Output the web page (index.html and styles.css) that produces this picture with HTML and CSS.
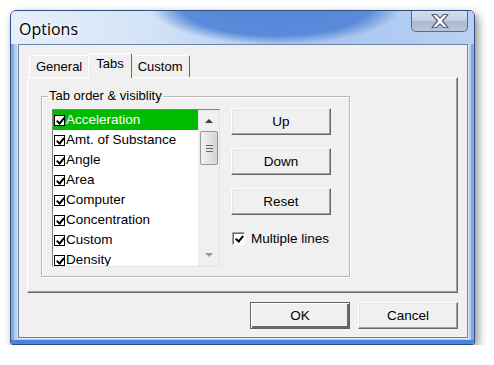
FILE: index.html
```html
<!DOCTYPE html>
<html lang="en">
<head>
    <meta charset="UTF-8">
    <title>Options</title>
    <link rel="stylesheet" href="styles.css">
</head>
<body>
    <div class="window">
        <div class="titlebar">
            <span class="title">Options</span>
            <button class="close-btn" aria-label="Close">
                <svg width="22" height="16" viewBox="0 0 22 16">
                    <path d="M3 1.5h4.5l3.5 3.6 3.5-3.6h4.5l-5.6 6.5 5.6 6.5h-4.5l-3.5-3.6-3.5 3.6h-4.5l5.6-6.5z" fill="#fff" stroke="#5b6478" stroke-width="1.2" stroke-linejoin="round"/>
                </svg>
            </button>
        </div>

        <div class="frame">
            <div class="client">
                <div class="tabs">
                    <div class="tab">General</div>
                    <div class="tab active">Tabs</div>
                    <div class="tab">Custom</div>
                </div>

                <div class="tab-panel">
                    <fieldset class="group">
                        <legend>Tab order &amp; visiblity</legend>
                        <div class="group-body">
                            <div class="listbox">
                                <ul class="items">
                                    <li class="selected"><span class="chk"></span>Acceleration</li>
                                    <li><span class="chk"></span>Amt. of Substance</li>
                                    <li><span class="chk"></span>Angle</li>
                                    <li><span class="chk"></span>Area</li>
                                    <li><span class="chk"></span>Computer</li>
                                    <li><span class="chk"></span>Concentration</li>
                                    <li><span class="chk"></span>Custom</li>
                                    <li><span class="chk"></span>Density</li>
                                </ul>
                                <div class="scrollbar">
                                    <span class="arrow up"></span>
                                    <div class="thumb"><span></span><span></span><span></span></div>
                                    <span class="arrow down"></span>
                                </div>
                            </div>

                            <div class="side">
                                <button class="btn">Up</button>
                                <button class="btn">Down</button>
                                <button class="btn">Reset</button>
                                <label class="check-row"><span class="box"></span>Multiple lines</label>
                            </div>
                        </div>
                    </fieldset>
                </div>

                <div class="footer">
                    <button class="btn default">OK</button>
                    <button class="btn">Cancel</button>
                </div>
            </div>
        </div>
    </div>
</body>
</html>
```

FILE: styles.css
```css
:root {
    --face: #f0f0f0;
    --shadow: #a0a0a0;
    --dark: #696969;
    --text: #000;
}

* {
    box-sizing: border-box;
}

body {
    margin: 0;
    padding: 10px 0 0 10px;
    background: #fff;
    font-family: 'Liberation Sans', Arial, sans-serif;
    font-size: 13px;
    color: var(--text);
}

.window {
    width: 465px;
    height: 335px;
    border: 1px solid #2f4f7e;
    border-radius: 6px 6px 3px 3px;
    background-color: #b4cdf0;
    box-shadow: 3px 4px 10px rgba(0,0,0,0.45);
    display: flex;
    flex-direction: column;
    overflow: hidden;
}

/* caption with a darker swoosh across the middle */
.titlebar {
    height: 33px;
    flex-shrink: 0;
    position: relative;
    display: flex;
    align-items: flex-start;
    background-color: #bcd3f3;
    background-image:
        radial-gradient(ellipse 125px 38px at 265px -4px, #5586d9 0%, #5a8ad9 75%, rgba(90,138,217,0) 100%),
        linear-gradient(to right, #e6effb 0%, #d3e3f7 30%, #a9c5ef 65%, #b8d1f3 100%);
}

.title {
    position: relative;
    font-family: 'Open Sans', 'DejaVu Sans', sans-serif;
    font-size: 16px;
    margin: 7px 0 0 8px;
    color: #000;
    text-shadow: 0 0 8px #fff, 0 0 4px #fff;
}

.close-btn {
    position: absolute;
    top: -1px;
    right: 6px;
    width: 57px;
    height: 22px;
    padding: 0;
    border: 1px solid #5a6b86;
    border-top: none;
    border-radius: 0 0 5px 5px;
    background-color: #b9c7dc;
    background-image: linear-gradient(to bottom, #d7e1ee 0%, #c2cfe2 50%, #a9b9d2 55%, #b7c6dc 100%);
    display: flex;
    align-items: center;
    justify-content: center;
}

/* side and bottom frame, blue toward the bottom edge */
.frame {
    flex: 1;
    display: flex;
    padding: 0 6px 6px 7px;
    background-color: #b4cdf0;
    box-shadow: inset 0 -4px 0 #4682df, inset 3px 0 0 #7fa9ea, inset -3px 0 0 #7fa9ea;
}

.client {
    flex: 1;
    border: 1px solid #6b84a8;
    box-shadow: 0 0 0 1px #dde8f8;
    background: var(--face);
    display: flex;
    flex-direction: column;
    padding: 8px 9px 0 8px;
}

.tabs {
    display: flex;
    align-items: flex-end;
    height: 24px;
    flex-shrink: 0;
    padding-left: 2px;
    position: relative;
    z-index: 1;
}

.tab {
    height: 22px;
    padding: 0 6px;
    line-height: 22px;
    border: 1px solid #fff;
    border-right-color: var(--dark);
    border-bottom: none;
    border-radius: 2px 2px 0 0;
    background: var(--face);
}

.tab.active {
    height: 25px;
    line-height: 20px;
    padding: 0 7px;
    margin: 0 -1px -1px;
    position: relative;
}

.tab-panel {
    height: 216px;
    flex-shrink: 0;
    border: 1px solid #fff;
    border-right-color: var(--dark);
    border-bottom-color: var(--dark);
    box-shadow: inset -1px -1px 0 var(--shadow);
    padding: 11px 0 0 13px;
}

.group {
    width: 309px;
    height: 188px;
    margin: 0;
    padding: 0 0 0 10px;
    border: 1px solid #b8b8b8;
    box-shadow: inset 1px 1px 0 #fff, 1px 1px 0 #fff;
}

.group legend {
    padding: 0 1px;
    margin-left: -4px;
    line-height: 14px;
}

.group-body {
    display: flex;
    gap: 11px;
    padding-top: 6px;
}

.listbox {
    width: 168px;
    height: 158px;
    border: 1px solid;
    border-color: #828282 #e3e3e3 #e3e3e3 #828282;
    background: #fff;
    display: flex;
    overflow: hidden;
}

.items {
    list-style: none;
    margin: 0;
    padding: 0;
    flex: 1;
}

.items li {
    height: 20px;
    line-height: 20px;
    display: flex;
    align-items: center;
    font-size: 13.5px;
    white-space: nowrap;
}

.items li.selected {
    background: #00bb00;
    color: #fff;
}

.chk {
    width: 11px;
    height: 11px;
    margin: 0 1px 0 1px;
    border: 1px solid #000;
    background: #fff;
    position: relative;
    flex-shrink: 0;
}

.chk::after {
    content: "";
    position: absolute;
    left: 3px;
    top: 0;
    width: 3px;
    height: 6px;
    border: solid #000;
    border-width: 0 2px 2px 0;
    transform: rotate(40deg);
}

.scrollbar {
    width: 21px;
    flex-shrink: 0;
    background: #f0f0f0;
    border-left: 1px solid #e8e8e8;
    display: flex;
    flex-direction: column;
    align-items: center;
}

.arrow {
    width: 0;
    height: 0;
    border-left: 4px solid transparent;
    border-right: 4px solid transparent;
    margin: 9px 0 8px;
}

.arrow.up {
    border-bottom: 4px solid #3c3c3c;
}

.arrow.down {
    margin-top: auto;
    margin-bottom: 9px;
    border-top: 4px solid #9a9a9a;
}

.thumb {
    width: 18px;
    height: 34px;
    border: 1px solid #979797;
    border-radius: 2px;
    background: linear-gradient(to right, #f3f3f3, #e4e4e4 50%, #d2d2d2);
    display: flex;
    flex-direction: column;
    align-items: center;
    justify-content: center;
    gap: 2px;
}

.thumb span {
    width: 7px;
    height: 1px;
    background: #666;
}

.side {
    display: flex;
    flex-direction: column;
    gap: 13px;
    margin-top: -1px;
}

.btn {
    width: 100px;
    height: 27px;
    padding: 0;
    font: inherit;
    font-size: 13.5px;
    font-weight: normal;
    color: #000;
    background: var(--face);
    border: 1px solid;
    border-color: #fff var(--dark) var(--dark) #fff;
    box-shadow: inset -1px -1px 0 var(--shadow), inset 1px 1px 0 #e3e3e3;
}

.btn.default {
    border: 1px solid #646464;
    box-shadow: inset 1px 1px 0 #fff, inset -2px -2px 0 var(--dark);
}

.check-row {
    display: flex;
    align-items: center;
    gap: 6px;
    margin: 3px 0 0 1px;
    font-size: 13.5px;
}

.box {
    width: 13px;
    height: 13px;
    border: 1px solid;
    border-color: var(--shadow) #fff #fff var(--shadow);
    box-shadow: inset 1px 1px 0 var(--dark);
    background: #fff;
    position: relative;
}

.box::after {
    content: "";
    position: absolute;
    left: 4px;
    top: 1px;
    width: 3px;
    height: 6px;
    border: solid #000;
    border-width: 0 2px 2px 0;
    transform: rotate(40deg);
}

.footer {
    display: flex;
    justify-content: flex-end;
    gap: 8px;
    padding: 9px 0 0 0;
}
```
